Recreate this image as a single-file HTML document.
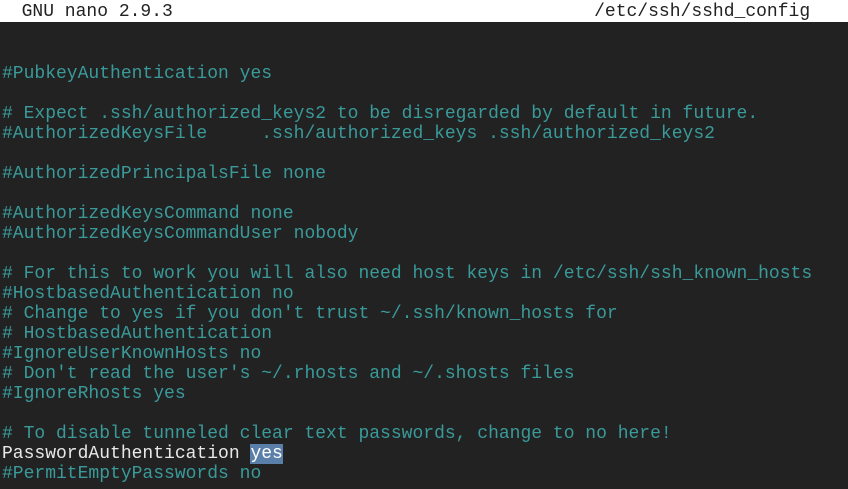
<!DOCTYPE html>
<html><head><style>
body{margin:0;width:848px;height:489px;background:#222222;overflow:hidden;font-family:"Liberation Mono",monospace;font-size:18px;}
.t{position:absolute;left:0;top:0;width:848px;height:22px;background:#fff;color:#222;line-height:24px;white-space:pre;}
.b{position:absolute;left:2px;top:24px;white-space:pre;line-height:20px;color:#3a9a9a;}
.w{color:#e8e8e8}
.h{background:#5a7fa8;color:#fff}
</style></head><body>
<div class="t">  GNU nano 2.9.3                                       /etc/ssh/sshd_config</div>
<div class="b">

#PubkeyAuthentication yes

# Expect .ssh/authorized_keys2 to be disregarded by default in future.
#AuthorizedKeysFile     .ssh/authorized_keys .ssh/authorized_keys2

#AuthorizedPrincipalsFile none

#AuthorizedKeysCommand none
#AuthorizedKeysCommandUser nobody

# For this to work you will also need host keys in /etc/ssh/ssh_known_hosts
#HostbasedAuthentication no
# Change to yes if you don't trust ~/.ssh/known_hosts for
# HostbasedAuthentication
#IgnoreUserKnownHosts no
# Don't read the user's ~/.rhosts and ~/.shosts files
#IgnoreRhosts yes

# To disable tunneled clear text passwords, change to no here!
<span class="w">PasswordAuthentication <span class="h">yes</span></span>
#PermitEmptyPasswords no</div>
</body></html>
